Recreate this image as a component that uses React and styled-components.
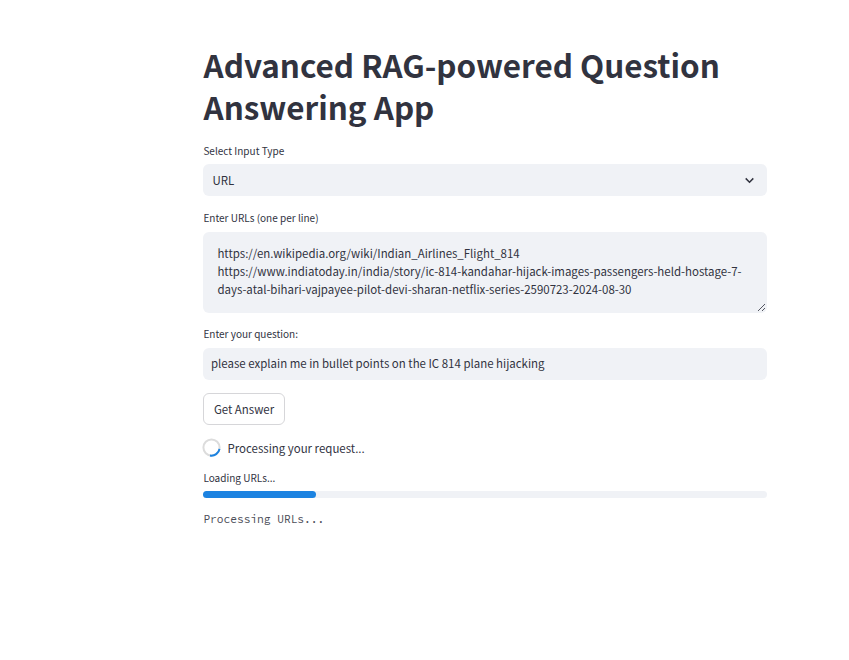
import React from "react";
import styled, { createGlobalStyle } from "styled-components";

const GlobalStyle = createGlobalStyle`
  *, *::before, *::after { box-sizing: border-box; }
  body {
    margin: 0;
    background: #ffffff;
    color: #31333f;
    font-family: "Source Sans Pro", "Noto Sans CJK SC", "Noto Sans", sans-serif;
    font-size: 11.46px;
  }
`;

const Page = styled.main`
  display: flex;
  flex-direction: column;
  width: 564px;
  min-height: 660px;
  margin-left: 203px;
  padding-top: 44px;
`;

const Title = styled.h1`
  margin: 0;
  height: 98px;
  padding-left: 0.5px;
  font-size: 31.43px;
  font-weight: 700;
  line-height: 42px;
  white-space: nowrap;
`;

const Field = styled.div`
  display: flex;
  flex-direction: column;
  margin-bottom: ${(p) => p.$gap}px;
`;

const Label = styled.label`
  height: ${(p) => p.$height || 22}px;
  padding-left: 0.4px;
  font-size: 10.03px;
  line-height: 18px;
`;

const Select = styled.div`
  display: flex;
  align-items: center;
  justify-content: space-between;
  height: 32px;
  padding: 0 12px 0 9.6px;
  border-radius: 6px;
  background: #f0f2f6;
  line-height: 18px;
`;

const TextAreaFrame = styled.div`
  position: relative;
  height: 81px;
`;

const TextArea = styled.textarea`
  display: block;
  width: 100%;
  height: 81px;
  margin: 0;
  padding: 12px 14.4px;
  border: 0;
  border-radius: 6px;
  outline: 0;
  background: #f0f2f6;
  color: inherit;
  font: inherit;
  line-height: 18px;
  resize: none;
  overflow: hidden;
`;

const Grip = styled.svg`
  position: absolute;
  right: 2px;
  bottom: 2px;
  width: 7px;
  height: 7px;
  pointer-events: none;
`;

const TextInput = styled.input`
  width: 100%;
  height: 32px;
  padding: 0 8px 2px;
  border: 0;
  border-radius: 6px;
  outline: 0;
  background: #f0f2f6;
  color: inherit;
  font: inherit;
`;

const Button = styled.button`
  width: 82px;
  height: 32px;
  padding: 0;
  border: 1px solid #d6d6d9;
  border-radius: 6px;
  background: #ffffff;
  color: inherit;
  font: inherit;
`;

const Status = styled.div`
  display: flex;
  align-items: center;
  gap: 6.5px;
  height: 20px;
  margin: 13px 0 11px -1px;
  line-height: 18px;
`;

const Spinner = styled.svg`
  width: 19px;
  height: 19px;
  flex: none;
  margin-bottom: 1px;
`;

const ProgressLabel = styled.div`
  height: 22px;
  padding-left: 0.4px;
  font-size: 10.03px;
  line-height: 18px;
`;

const Track = styled.div`
  height: 7px;
  border-radius: 4px;
  background: #f0f2f6;
`;

const Fill = styled.div`
  width: 20%;
  height: 100%;
  border-radius: 4px;
  background: #1c83e1;
`;

const Log = styled.pre`
  margin: 12px 0 0;
  padding-left: 0.4px;
  font-family: "Source Code Pro", "Noto Sans Mono CJK SC", "DejaVu Sans Mono", monospace;
  font-size: 11.2px;
  line-height: 18px;
  color: #4b4d58;
`;

const urls = `https://en.wikipedia.org/wiki/Indian_Airlines_Flight_814
https://www.indiatoday.in/india/story/ic-814-kandahar-hijack-images-passengers-held-hostage-7-days-atal-bihari-vajpayee-pilot-devi-sharan-netflix-series-2590723-2024-08-30`;

export default function App() {
  return (
    <>
      <GlobalStyle />
      <Page>
        <Title>Advanced RAG-powered Question<br />Answering App</Title>
        <Field $gap={13}>
          <Label>Select Input Type</Label>
          <Select>
            <span>URL</span>
            <svg width="11" height="8" viewBox="0 0 11 8" fill="none" aria-hidden="true">
              <path d="M1.7 2.4 5.5 6.2 9.3 2.4" stroke="#31333f" strokeWidth="1.5" />
            </svg>
          </Select>
        </Field>
        <Field $gap={12}>
          <Label htmlFor="urls" $height={23}>Enter URLs (one per line)</Label>
          <TextAreaFrame>
            <TextArea id="urls" defaultValue={urls} spellCheck={false} />
            <Grip viewBox="0 0 7 7" aria-hidden="true">
              <path d="M0 7 7 0M4 7 7 4" stroke="#555762" strokeWidth="1" />
            </Grip>
          </TextAreaFrame>
        </Field>
        <Field $gap={13}>
          <Label htmlFor="question" $height={23}>Enter your question:</Label>
          <TextInput id="question" defaultValue="please explain me in bullet points on the IC 814 plane hijacking" />
        </Field>
        <Button>Get Answer</Button>
        <Status>
          <Spinner viewBox="0 0 19 19" fill="none" strokeWidth="2" aria-hidden="true">
            <circle cx="9.5" cy="9.5" r="8.1" stroke="#dcdcdc" />
            <path d="M17.5 10.8A8.1 8.1 0 0 1 8 17.5" stroke="#1c83e1" />
          </Spinner>
          <span>Processing your request...</span>
        </Status>
        <ProgressLabel>Loading URLs...</ProgressLabel>
        <Track>
          <Fill />
        </Track>
        <Log>Processing URLs...</Log>
      </Page>
    </>
  );
}
